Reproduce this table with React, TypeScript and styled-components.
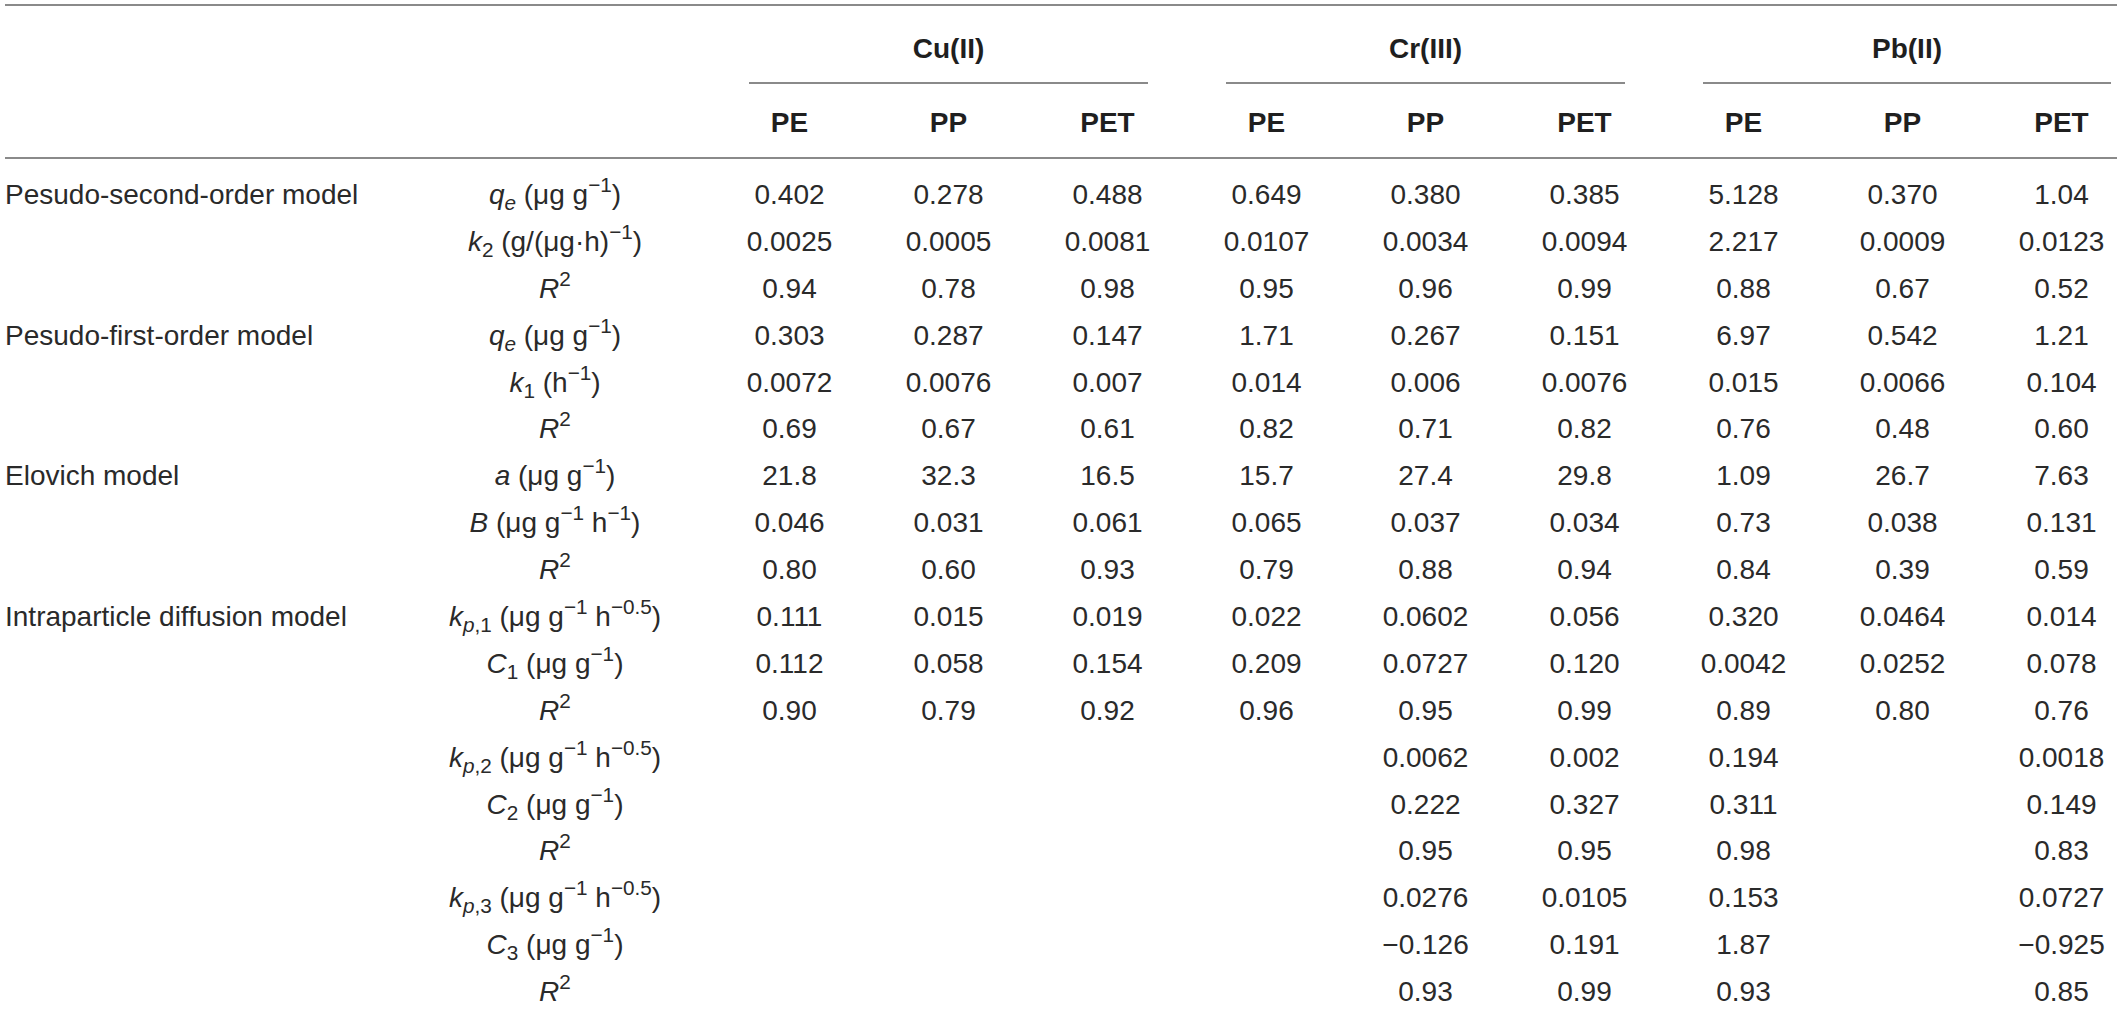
import React from "react";
import styled, { createGlobalStyle, css } from "styled-components";

const GlobalStyle = createGlobalStyle`
  html, body {
    margin: 0;
    padding: 0;
    background: #ffffff;
    overflow: hidden;
  }
  body {
    font-family: "Liberation Sans", Arial, Helvetica, sans-serif;
    color: #2a2a2a;
  }
`;

const RULE = "#8a8a8a";

const columns = css`
  display: grid;
  grid-template-columns: 395px 310px repeat(9, 159px);
`;

const Page = styled.div`
  padding: 4px 0 0 5px;
  width: 2200px;
`;

const Table = styled.div`
  width: 2136px;
  border-top: 2px solid ${RULE};
  font-size: 28px;
`;

const GroupRow = styled.div`
  ${columns};
  height: 78px;
`;

const GroupCell = styled.div<{ $start: number; $insetRight: number }>`
  grid-column: ${(p) => p.$start} / span 3;
  margin: 0 ${(p) => p.$insetRight}px 0 39px;
  padding-top: 10px;
  border-bottom: 2px solid ${RULE};
  display: flex;
  align-items: center;
  justify-content: center;
  font-weight: bold;
  color: #1f1f1f;
`;

const SubHeaderRow = styled.div`
  ${columns};
  box-sizing: border-box;
  height: 75px;
  padding-top: 4px;
  border-bottom: 2px solid ${RULE};
  align-items: center;
`;

const HeadCell = styled.div<{ $col: number }>`
  grid-column: ${(p) => p.$col};
  text-align: center;
  font-weight: bold;
  color: #1f1f1f;
`;

const Body = styled.div`
  padding-top: 13px;
`;

const Row = styled.div`
  ${columns};
  height: 46.9px;
  line-height: 46.9px;
  white-space: nowrap;
`;

const Label = styled.div`
  text-align: left;
`;

const Param = styled.div`
  text-align: center;
`;

const Value = styled.div`
  text-align: center;
`;

const Var = styled.i`
  font-style: italic;
`;

const Sub = styled.sub`
  font-size: 0.74em;
  vertical-align: -0.28em;
  line-height: 0;
`;

const Sup = styled.sup`
  font-size: 0.74em;
  vertical-align: 0.6em;
  line-height: 0;
`;

const M = "\u2212";

const perG = (
  <>
    (μg g<Sup>{M}1</Sup>)
  </>
);
const perGH05 = (
  <>
    (μg g<Sup>{M}1</Sup> h<Sup>{M}0.5</Sup>)
  </>
);

const R2 = (
  <>
    <Var>R</Var>
    <Sup>2</Sup>
  </>
);

const kp = (n: number) => (
  <>
    <Var>k</Var>
    <Sub>
      <Var>p</Var>,{n}
    </Sub>{" "}
    {perGH05}
  </>
);

const Cn = (n: number) => (
  <>
    <Var>C</Var>
    <Sub>{n}</Sub> {perG}
  </>
);

type RowData = { label?: string; param: React.ReactNode; values: string[] };

const rows: RowData[] = [
  {
    label: "Pesudo-second-order model",
    param: (
      <>
        <Var>q</Var>
        <Sub>
          <Var>e</Var>
        </Sub>{" "}
        {perG}
      </>
    ),
    values: ["0.402", "0.278", "0.488", "0.649", "0.380", "0.385", "5.128", "0.370", "1.04"],
  },
  {
    param: (
      <>
        <Var>k</Var>
        <Sub>2</Sub> (g/(μg·h)<Sup>{M}1</Sup>)
      </>
    ),
    values: ["0.0025", "0.0005", "0.0081", "0.0107", "0.0034", "0.0094", "2.217", "0.0009", "0.0123"],
  },
  {
    param: R2,
    values: ["0.94", "0.78", "0.98", "0.95", "0.96", "0.99", "0.88", "0.67", "0.52"],
  },
  {
    label: "Pesudo-first-order model",
    param: (
      <>
        <Var>q</Var>
        <Sub>
          <Var>e</Var>
        </Sub>{" "}
        {perG}
      </>
    ),
    values: ["0.303", "0.287", "0.147", "1.71", "0.267", "0.151", "6.97", "0.542", "1.21"],
  },
  {
    param: (
      <>
        <Var>k</Var>
        <Sub>1</Sub> (h<Sup>{M}1</Sup>)
      </>
    ),
    values: ["0.0072", "0.0076", "0.007", "0.014", "0.006", "0.0076", "0.015", "0.0066", "0.104"],
  },
  {
    param: R2,
    values: ["0.69", "0.67", "0.61", "0.82", "0.71", "0.82", "0.76", "0.48", "0.60"],
  },
  {
    label: "Elovich model",
    param: (
      <>
        <Var>a</Var> {perG}
      </>
    ),
    values: ["21.8", "32.3", "16.5", "15.7", "27.4", "29.8", "1.09", "26.7", "7.63"],
  },
  {
    param: (
      <>
        <Var>B</Var> (μg g<Sup>{M}1</Sup> h<Sup>{M}1</Sup>)
      </>
    ),
    values: ["0.046", "0.031", "0.061", "0.065", "0.037", "0.034", "0.73", "0.038", "0.131"],
  },
  {
    param: R2,
    values: ["0.80", "0.60", "0.93", "0.79", "0.88", "0.94", "0.84", "0.39", "0.59"],
  },
  {
    label: "Intraparticle diffusion model",
    param: kp(1),
    values: ["0.111", "0.015", "0.019", "0.022", "0.0602", "0.056", "0.320", "0.0464", "0.014"],
  },
  {
    param: Cn(1),
    values: ["0.112", "0.058", "0.154", "0.209", "0.0727", "0.120", "0.0042", "0.0252", "0.078"],
  },
  {
    param: R2,
    values: ["0.90", "0.79", "0.92", "0.96", "0.95", "0.99", "0.89", "0.80", "0.76"],
  },
  {
    param: kp(2),
    values: ["", "", "", "", "0.0062", "0.002", "0.194", "", "0.0018"],
  },
  {
    param: Cn(2),
    values: ["", "", "", "", "0.222", "0.327", "0.311", "", "0.149"],
  },
  {
    param: R2,
    values: ["", "", "", "", "0.95", "0.95", "0.98", "", "0.83"],
  },
  {
    param: kp(3),
    values: ["", "", "", "", "0.0276", "0.0105", "0.153", "", "0.0727"],
  },
  {
    param: Cn(3),
    values: ["", "", "", "", `${M}0.126`, "0.191", "1.87", "", `${M}0.925`],
  },
  {
    param: R2,
    values: ["", "", "", "", "0.93", "0.99", "0.93", "", "0.85"],
  },
];

const groups = [
  { name: "Cu(II)", start: 3, insetRight: 39 },
  { name: "Cr(III)", start: 6, insetRight: 39 },
  { name: "Pb(II)", start: 9, insetRight: 30 },
];

const polymers = ["PE", "PP", "PET"];

export default function App() {
  return (
    <>
      <GlobalStyle />
      <Page>
        <Table>
          <GroupRow>
            {groups.map((g) => (
              <GroupCell key={g.name} $start={g.start} $insetRight={g.insetRight}>
                {g.name}
              </GroupCell>
            ))}
          </GroupRow>
          <SubHeaderRow>
            {groups.flatMap((g) =>
              polymers.map((p, i) => (
                <HeadCell key={g.name + p} $col={g.start + i}>
                  {p}
                </HeadCell>
              ))
            )}
          </SubHeaderRow>
          <Body>
            {rows.map((r, ri) => (
              <Row key={ri}>
                <Label>{r.label ?? ""}</Label>
                <Param>{r.param}</Param>
                {r.values.map((v, vi) => (
                  <Value key={vi}>{v}</Value>
                ))}
              </Row>
            ))}
          </Body>
        </Table>
      </Page>
    </>
  );
}
